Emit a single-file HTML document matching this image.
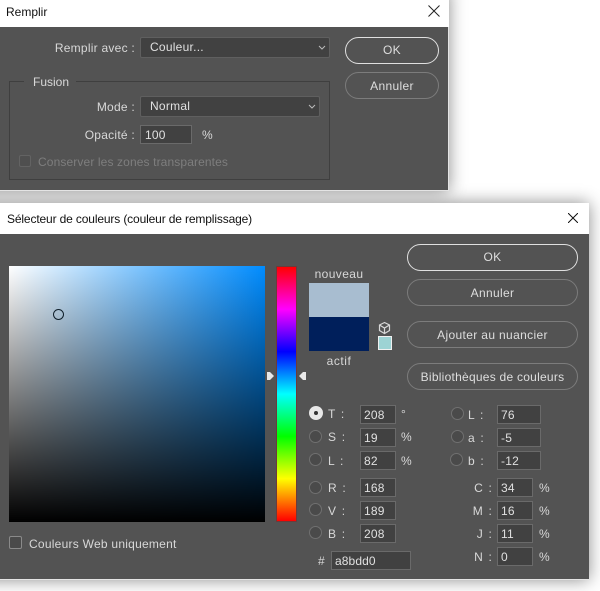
<!DOCTYPE html>
<html><head><meta charset="utf-8"><style>
*{box-sizing:border-box}
html,body{margin:0;padding:0}
body{width:600px;height:591px;background:#fff;position:relative;overflow:hidden;font-family:"Liberation Sans",sans-serif;font-size:12px;color:#d8d8d8}
div{position:absolute}
.t{white-space:nowrap;line-height:14px;letter-spacing:.25px}
.l{letter-spacing:1.2px}
.r{text-align:right}
.c{text-align:center}
.btn{border:1px solid #7c7c7c;border-radius:14px;height:27px;line-height:26px;text-align:center;color:#dedede;letter-spacing:.35px;white-space:nowrap}
.def{border:1.3px solid #e0e0e0;line-height:25px}
.in{background:#414141;border:1px solid #6a6a6a;height:19px;line-height:18px;padding-left:3px;color:#e0e0e0;letter-spacing:.2px;white-space:nowrap}
.sel{background:#414141;border:1px solid #5f5f5f;border-radius:2px;height:21px;line-height:19px;padding-left:9px;color:#e0e0e0;letter-spacing:.25px}
.rad{width:13px;height:13px;border-radius:50%;background:#4a4a4a;border:1px solid #707070}
</style></head><body>

<!-- shadows -->
<div style="left:-20px;top:-10px;width:469px;height:201px;box-shadow:0 0 16px rgba(0,0,0,.45)"></div>
<div style="left:-20px;top:203px;width:609px;height:377px;background:#fff;box-shadow:0 0 16px rgba(0,0,0,.45)"></div>

<!-- dialog 1 -->
<div style="left:0;top:0;width:449px;height:27px;background:#fff"></div>
<div style="left:0;top:27px;width:449px;height:164px;background:#535353;border-right:1px solid #e4e4e4;border-bottom:1px solid #e4e4e4"></div>
<div class="t" style="left:6px;top:5px;color:#111;letter-spacing:0">Remplir</div>
<svg style="position:absolute;left:428px;top:5px" width="12" height="12" viewBox="0 0 12 12"><path d="M.5.5l11 11M11.500.5l-11 11" stroke="#222" stroke-width="1" fill="none"/></svg>

<div class="t r" style="left:20px;width:115px;top:41px">Remplir avec :</div>
<div class="sel" style="left:140px;top:37px;width:190px">Couleur...</div>
<svg style="position:absolute;left:318px;top:45px" width="8" height="6"><path d="M1 1l3 3 3-3" stroke="#bbb" fill="none"/></svg>
<div class="btn def" style="left:345px;top:37px;width:94px">OK</div>
<div class="btn" style="left:345px;top:72px;width:94px">Annuler</div>

<div style="left:9px;top:81px;width:321px;height:99px;border:1px solid #3f3f3f"></div>
<div class="t" style="left:24px;top:75px;width:52px;background:#535353;padding-left:9px;letter-spacing:0">Fusion</div>
<div class="t r" style="left:20px;width:115px;top:100px">Mode :</div>
<div class="sel" style="left:140px;top:96px;width:180px">Normal</div>
<svg style="position:absolute;left:308px;top:104px" width="8" height="6"><path d="M1 1l3 3 3-3" stroke="#bbb" fill="none"/></svg>
<div class="t r" style="left:20px;width:115px;top:128px">Opacité :</div>
<div class="in" style="left:140px;top:125px;width:52px;padding-left:4px">100</div>
<div class="t" style="left:202px;top:128px">%</div>
<div style="left:19px;top:155px;width:12px;height:12px;border:1px solid #636363;border-radius:2px;background:#4f4f4f"></div>
<div class="t" style="left:38px;top:155px;color:#7e7e7e;letter-spacing:.12px">Conserver les zones transparentes</div>

<!-- dialog 2 -->
<div style="left:0;top:234px;width:589px;height:346px;background:#535353;border-bottom:1px solid #e4e4e4"></div>
<div class="t" style="left:7px;top:212px;color:#111;letter-spacing:-.14px">Sélecteur de couleurs (couleur de remplissage)</div>
<svg style="position:absolute;left:568px;top:213px" width="10" height="10" viewBox="0 0 10 10"><path d="M0 0l10 10M10 0L0 10" stroke="#111" stroke-width="1" fill="none"/></svg>

<div style="left:9px;top:266px;width:256px;height:256px;background:linear-gradient(to bottom,rgba(0,0,0,0),#000),linear-gradient(to right,#fff,#008cff)"></div>
<div style="left:53px;top:309px;width:11px;height:11px;border-radius:50%;border:1.2px solid #10202c"></div>

<div style="left:276px;top:266px;width:21px;height:256px;border:1px solid #6e3a3a;background:linear-gradient(to bottom,#f00,#f0f 16.67%,#00f 33.33%,#0ff 50%,#0f0 66.67%,#ff0 83.33%,#f00)"></div>
<svg style="position:absolute;left:266px;top:371px" width="10" height="10"><path d="M1 1h3l4 4-4 4H1z" fill="#e8e8e8"/></svg>
<svg style="position:absolute;left:297px;top:371px" width="10" height="10"><path d="M9 1v8H6L2 5l4-4z" fill="#e8e8e8"/></svg>

<div class="t c" style="left:309px;width:60px;top:267px;letter-spacing:.4px">nouveau</div>
<div style="left:309px;top:283px;width:60px;height:34px;background:#a8bdd0"></div>
<div style="left:309px;top:317px;width:60px;height:34px;background:#001f5b"></div>
<div class="t c" style="left:309px;width:60px;top:354px;letter-spacing:.55px">actif</div>
<svg style="position:absolute;left:378px;top:321px" width="13" height="14" viewBox="0 0 13 14"><path d="M6.500 1.500l5 2.500v5.500l-5 3-5-3V4zM1.500 4l5 3 5-3M6.500 7v5.500" fill="none" stroke="#d8d8d8" stroke-width="1.200"/></svg>
<div style="left:378px;top:336px;width:14px;height:14px;background:#9dd3d4;border:1px solid #f0f0f0"></div>

<div class="btn def" style="left:407px;top:244px;width:171px">OK</div>
<div class="btn" style="left:407px;top:279px;width:171px">Annuler</div>
<div class="btn" style="left:407px;top:321px;width:171px">Ajouter au nuancier</div>
<div class="btn" style="left:407px;top:363px;width:171px;letter-spacing:.25px">Bibliothèques de couleurs</div>

<!-- left fields -->
<div style="left:309px;top:406px;width:14px;height:14px;border-radius:50%;background:#e8e8e8"></div>
<div style="left:314px;top:411px;width:4px;height:4px;border-radius:50%;background:#333"></div>
<div class="rad" style="left:309px;top:430px"></div>
<div class="rad" style="left:309px;top:453px"></div>
<div class="rad" style="left:309px;top:481px"></div>
<div class="rad" style="left:309px;top:503px"></div>
<div class="rad" style="left:309px;top:526px"></div>
<div class="t l" style="left:328px;top:407px">T :</div>
<div class="t l" style="left:328px;top:430px">S :</div>
<div class="t l" style="left:328px;top:454px">L :</div>
<div class="t l" style="left:328px;top:481px">R :</div>
<div class="t l" style="left:328px;top:504px">V :</div>
<div class="t l" style="left:328px;top:527px">B :</div>
<div class="in" style="left:360px;top:405px;width:36px">208</div>
<div class="in" style="left:360px;top:428px;width:36px">19</div>
<div class="in" style="left:360px;top:451px;width:36px">82</div>
<div class="in" style="left:360px;top:478px;width:36px">168</div>
<div class="in" style="left:360px;top:501px;width:36px">189</div>
<div class="in" style="left:360px;top:524px;width:36px">208</div>
<div class="t" style="left:401px;top:407px">°</div>
<div class="t" style="left:401px;top:430px">%</div>
<div class="t" style="left:401px;top:454px">%</div>
<div class="t" style="left:318px;top:554px">#</div>
<div class="in" style="left:331px;top:551px;width:80px;letter-spacing:.1px">a8bdd0</div>

<!-- right fields -->
<div class="rad" style="left:451px;top:407px"></div>
<div class="rad" style="left:451px;top:430px"></div>
<div class="rad" style="left:450px;top:453px"></div>
<div class="t l" style="left:468px;top:408px">L :</div>
<div class="t l" style="left:468px;top:431px">a :</div>
<div class="t l" style="left:468px;top:454px">b :</div>
<div class="in" style="left:497px;top:405px;width:44px">76</div>
<div class="in" style="left:497px;top:428px;width:44px">-5</div>
<div class="in" style="left:497px;top:451px;width:44px">-12</div>
<div class="t r l" style="left:460px;width:33px;top:481px">C :</div>
<div class="t r l" style="left:460px;width:33px;top:504px">M :</div>
<div class="t r l" style="left:460px;width:33px;top:527px">J :</div>
<div class="t r l" style="left:460px;width:33px;top:550px">N :</div>
<div class="in" style="left:497px;top:478px;width:36px">34</div>
<div class="in" style="left:497px;top:501px;width:36px">16</div>
<div class="in" style="left:497px;top:524px;width:36px">11</div>
<div class="in" style="left:497px;top:547px;width:36px">0</div>
<div class="t" style="left:539px;top:481px">%</div>
<div class="t" style="left:539px;top:504px">%</div>
<div class="t" style="left:539px;top:527px">%</div>
<div class="t" style="left:539px;top:550px">%</div>

<div style="left:9px;top:536px;width:13px;height:13px;border:1px solid #8a8a8a;border-radius:2px;background:#4a4a4a"></div>
<div class="t" style="left:29px;top:537px;letter-spacing:.25px">Couleurs Web uniquement</div>
</body></html>
